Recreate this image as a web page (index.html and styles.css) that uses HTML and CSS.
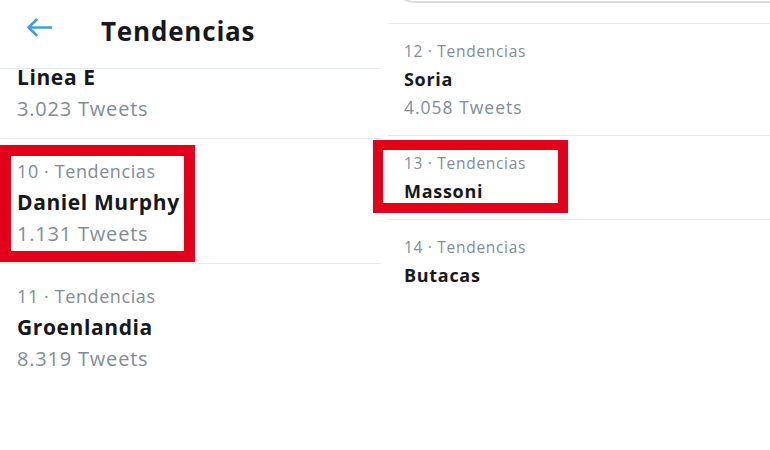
FILE: index.html
```html
<!DOCTYPE html>
<html lang="es">
<head>
<meta charset="utf-8">
<title>Tendencias</title>
<link rel="stylesheet" href="styles.css">
</head>
<body>
<div class="page">
  <section class="panel left">
    <header class="header">
      <svg class="back" width="27" height="19" viewBox="0 0 27 19" aria-hidden="true">
        <path d="M2.5 9.5 H25 M10.5 1.8 L2.5 9.5 L10.5 17.2" fill="none" stroke="#3d9fe3" stroke-width="2.6" stroke-linecap="round" stroke-linejoin="round"/>
      </svg>
      <h1 class="title">Tendencias</h1>
    </header>
    <div class="list">
      <div class="item first">
        <div class="name">Linea E</div>
        <div class="count">3.023 Tweets</div>
      </div>
      <div class="item">
        <div class="label">10 · Tendencias</div>
        <div class="name">Daniel Murphy</div>
        <div class="count">1.131 Tweets</div>
      </div>
      <div class="item noborder">
        <div class="label">11 · Tendencias</div>
        <div class="name">Groenlandia</div>
        <div class="count">8.319 Tweets</div>
      </div>
    </div>
  </section>
  <section class="panel right">
    <div class="search-strip"><div class="search"></div></div>
    <div class="list small">
      <div class="item">
        <div class="label">12 · Tendencias</div>
        <div class="name">Soria</div>
        <div class="count">4.058 Tweets</div>
      </div>
      <div class="item">
        <div class="label">13 · Tendencias</div>
        <div class="name">Massoni</div>
      </div>
      <div class="item noborder">
        <div class="label">14 · Tendencias</div>
        <div class="name">Butacas</div>
      </div>
    </div>
  </section>
  <div class="mark mark-one"></div>
  <div class="mark mark-two"></div>
</div>
</body>
</html>
```
FILE: styles.css
```css
* { box-sizing: border-box; }
html, body { margin: 0; padding: 0; background: #fff; }
body {
  font-family: "Open Sans", "Noto Sans", sans-serif;
  color: #16191c;
  width: 770px;
  height: 450px;
  overflow: hidden;
}
.page {
  position: relative;
  display: flex;
  gap: 7px;
  width: 770px;
  height: 450px;
}
.panel { display: flex; flex-direction: column; overflow: hidden; }
.left { width: 381px; }
.right { flex: 1; }

.header {
  height: 69px;
  flex: none;
  display: flex;
  align-items: center;
  border-bottom: 1px solid #e3e8eb;
  padding-left: 26px;
}
.back { display: block; margin-top: -14px; }
.title {
  margin: -6px 0 0 48px;
  font-size: 26px;
  font-weight: 700;
  letter-spacing: 0.8px;
  line-height: 30px;
}

.list { overflow: hidden; flex: 1; }
.item {
  padding: 17px 0 14px 17px;
  border-bottom: 1px solid #e6eaed;
}
.item.first { padding-top: 0; margin-top: -7px; }
.item.noborder { border-bottom: none; }
.label, .name, .count { line-height: 31px; white-space: nowrap; }
.label { font-size: 18px; letter-spacing: 0.6px; color: #808d97; }
.name { font-size: 21px; font-weight: 700; letter-spacing: 0.6px; }
.count { font-size: 20px; letter-spacing: 0.8px; color: #808d97; }

.search-strip {
  height: 24px;
  flex: none;
  overflow: hidden;
  border-bottom: 1px solid #e4ecef;
  padding-left: 6px;
}
.search {
  height: 40px;
  margin-top: -37px;
  margin-right: -40px;
  border: 2px solid #d8dde1;
  border-radius: 20px;
  background: #fff;
}
.small .item { padding: 13px 0 14px 16px; }
.small .label, .small .name, .small .count { line-height: 28px; }
.small .label { font-size: 15.5px; letter-spacing: 0.7px; }
.small .name { font-size: 18px; letter-spacing: 0.7px; }
.small .count { font-size: 17.5px; letter-spacing: 1px; }

.mark {
  position: absolute;
  border: 11px solid #e2001a;
}
.mark-one { left: 0; top: 145px; width: 195px; height: 117px; }
.mark-two { left: 373px; top: 140px; width: 195px; height: 73px; border-width: 10px; }
```
